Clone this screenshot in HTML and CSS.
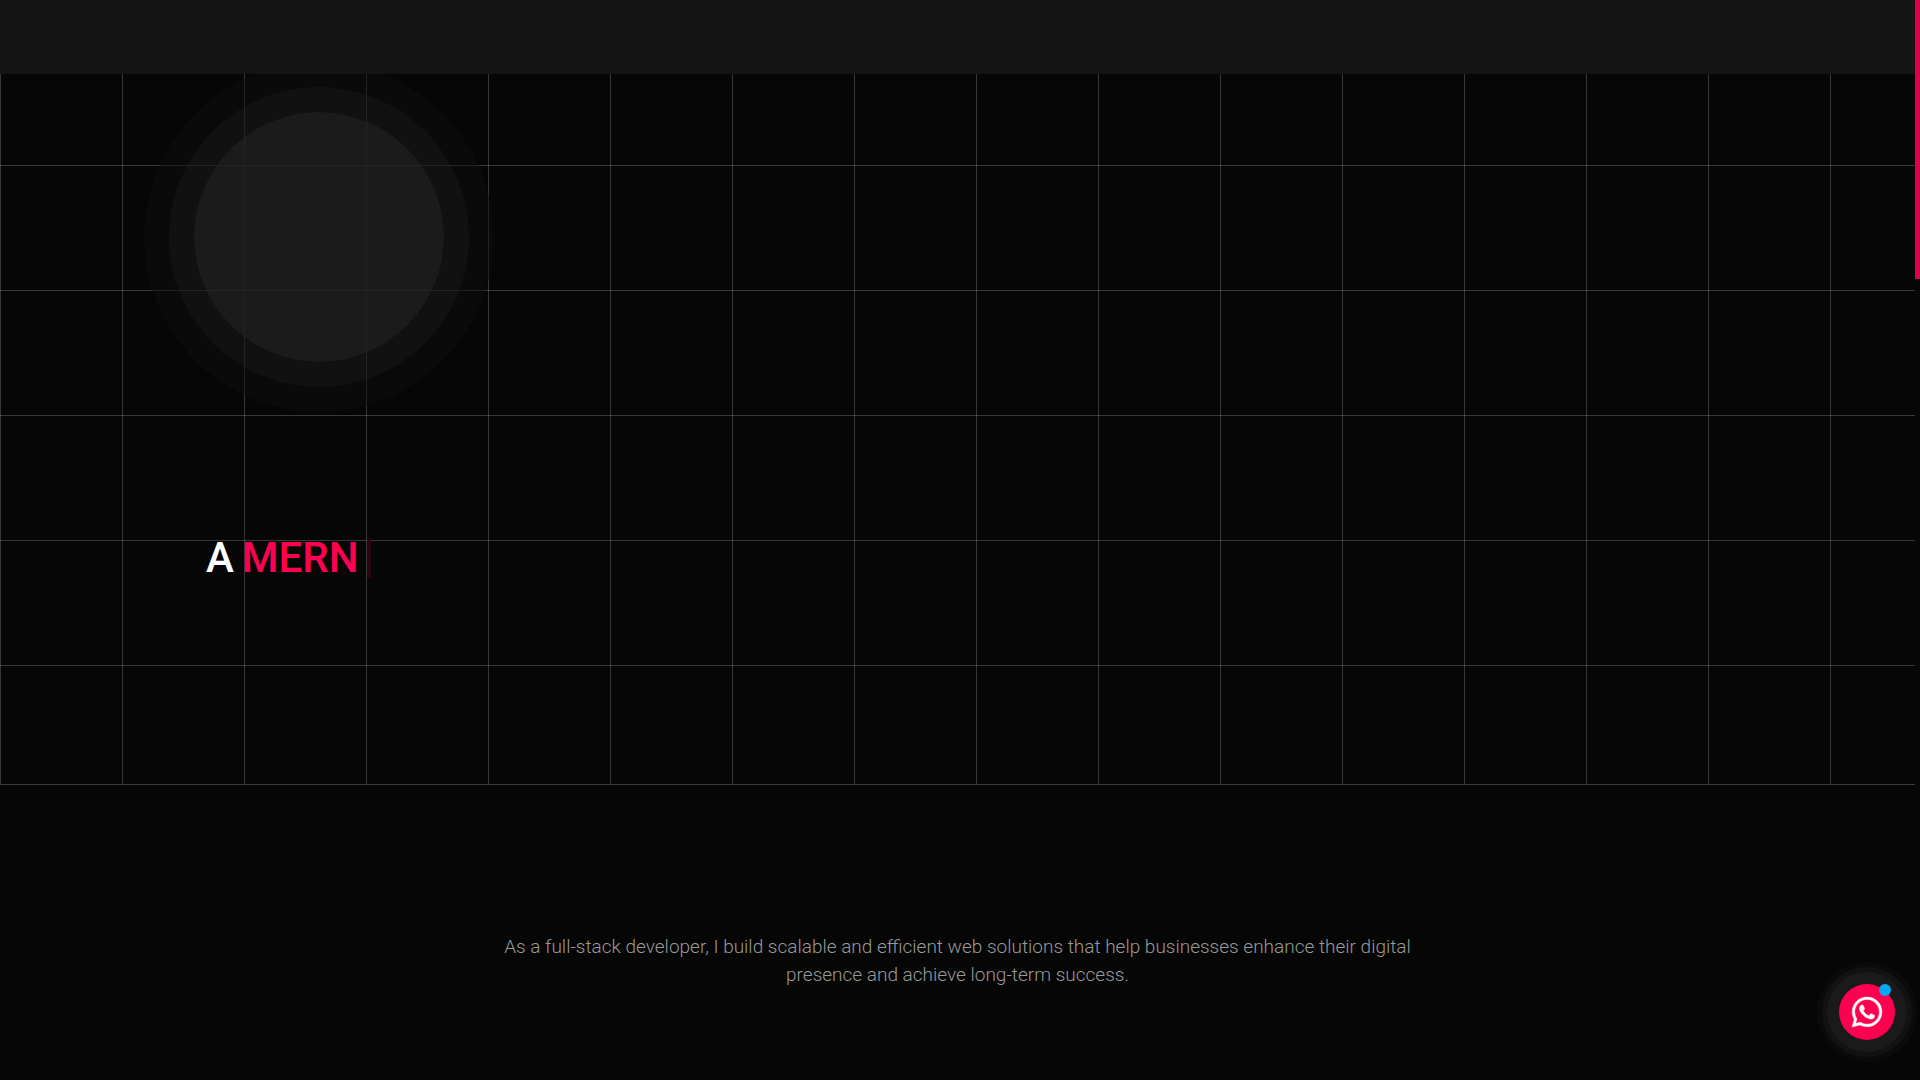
FILE: index.html
```html
<!DOCTYPE html>
<html lang="en">
<head>
<meta charset="utf-8">
<meta name="viewport" content="width=device-width, initial-scale=1">
<title>MERN Developer</title>
<link rel="stylesheet" href="styles.css">
</head>
<body>
<header class="topbar"></header>
<main>
  <section class="hero">
    <div class="portrait"></div>
    <h1 class="headline">A <span class="accent">MERN</span><span class="caret"></span></h1>
  </section>
  <section class="about">
    <p class="lead">As a full-stack developer, I build scalable and efficient web solutions that help businesses enhance their digital presence and achieve long-term success.</p>
  </section>
</main>
<div class="scroll-track"><div class="scroll-thumb"></div></div>
<button class="chat" type="button" aria-label="WhatsApp">
  <svg class="chat-icon" viewBox="0 0 24 24" aria-hidden="true"><path fill="currentColor" stroke="currentColor" stroke-width=".4" d="M17.472 14.382c-.297-.149-1.758-.867-2.03-.967-.273-.099-.471-.148-.67.15-.197.297-.767.966-.94 1.164-.173.199-.347.223-.644.075-.297-.15-1.255-.463-2.39-1.475-.883-.788-1.48-1.761-1.653-2.059-.173-.297-.018-.458.13-.606.134-.133.298-.347.446-.52.149-.174.198-.298.298-.497.099-.198.05-.371-.025-.52-.075-.149-.669-1.612-.916-2.207-.242-.579-.487-.5-.669-.51-.173-.008-.371-.01-.57-.01-.198 0-.52.074-.792.372-.272.297-1.04 1.016-1.04 2.479 0 1.462 1.065 2.875 1.213 3.074.149.198 2.096 3.2 5.077 4.487.709.306 1.262.489 1.694.625.712.227 1.36.195 1.871.118.571-.085 1.758-.719 2.006-1.413.248-.694.248-1.289.173-1.413-.074-.124-.272-.198-.57-.347m-5.421 7.403h-.004a9.87 9.87 0 01-5.031-1.378l-.361-.214-3.741.982.998-3.648-.235-.374a9.86 9.86 0 01-1.51-5.26c.001-5.45 4.436-9.884 9.888-9.884 2.64 0 5.122 1.03 6.988 2.898a9.825 9.825 0 012.893 6.994c-.003 5.45-4.437 9.884-9.885 9.884m8.413-18.297A11.815 11.815 0 0012.05 0C5.495 0 .16 5.335.157 11.892c0 2.096.547 4.142 1.588 5.945L.057 24l6.305-1.654a11.882 11.882 0 005.683 1.448h.005c6.554 0 11.89-5.335 11.893-11.893a11.821 11.821 0 00-3.48-8.413z"/></svg>
  <span class="badge"></span>
</button>
</body>
</html>
```
FILE: styles.css
```css
* { box-sizing: border-box; }
body {
  margin: 0;
  min-height: 100vh;
  padding-right: 5px;
  background: #060606;
  color: #fff;
  font-family: "Roboto", "Liberation Sans", sans-serif;
}
.topbar { position: relative; z-index: 1; height: 74px; background: #141414; }
.hero {
  padding: 38px 194px 200px;
  border-bottom: 1px solid #3a3a3a;
  background:
    repeating-linear-gradient(90deg, rgba(255,255,255,.2) 0 1px, transparent 1px 122px),
    repeating-linear-gradient(180deg, transparent 0 91px, rgba(255,255,255,.2) 91px 92px, transparent 92px 125px);
}
.portrait {
  width: 250px;
  height: 250px;
  border-radius: 50%;
  background: rgba(31, 31, 31, .83);
  box-shadow: 0 0 0 25px rgba(37, 37, 37, .3), 0 0 0 50px rgba(14, 14, 14, .5);
}
.headline {
  display: flex;
  align-items: center;
  gap: 8px;
  margin: 170px 0 0 12px;
  font-size: 42px;
  font-weight: 500;
  line-height: 52px;
}
.accent { color: #ff0050; }
.caret { width: 4px; height: 40px; background: #2a0513; }
.about { padding: 148px 24px 80px; }
.lead {
  max-width: 920px;
  margin: 0 auto;
  color: #999;
  font-size: 19px;
  font-weight: 300;
  line-height: 28px;
  text-align: center;
}
.scroll-track { position: fixed; top: 0; right: 0; bottom: 0; width: 5px; background: #060606; }
.scroll-thumb { height: 279px; background: #dc004b; }
.chat {
  position: fixed;
  right: 25px;
  bottom: 40px;
  display: grid;
  place-items: center;
  width: 56px;
  height: 56px;
  padding: 0;
  border: 0;
  border-radius: 50%;
  background: #ff0050;
  color: #fff;
  box-shadow: 0 0 0 12px #1a1a1a, 0 0 0 17px #121212, 0 0 0 22px #0a0a0a;
}
.chat-icon { width: 30px; height: 30px; overflow: visible; }
.badge {
  position: absolute;
  top: 0;
  right: 4px;
  width: 12px;
  height: 12px;
  border-radius: 50%;
  background: #03a9f4;
}
```
